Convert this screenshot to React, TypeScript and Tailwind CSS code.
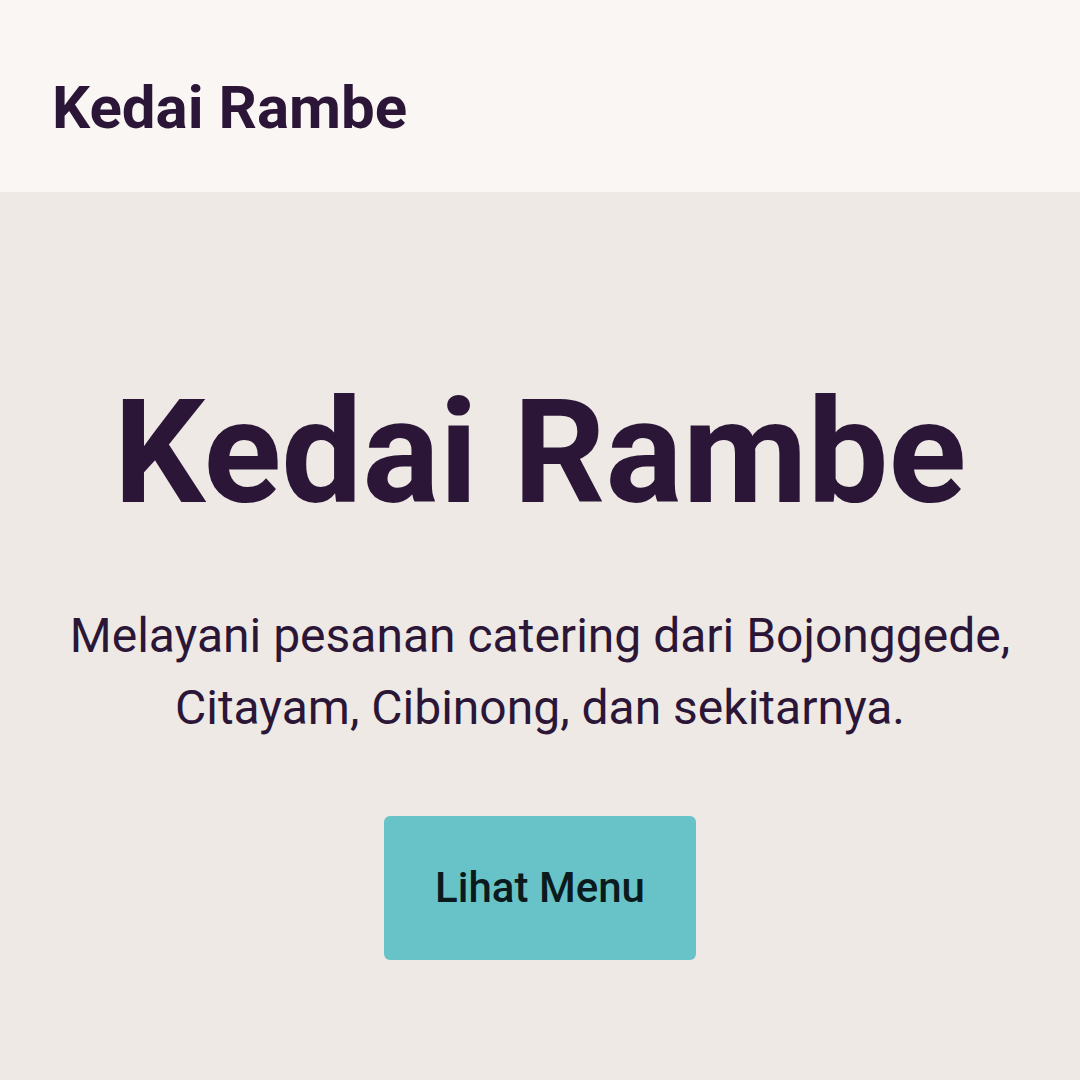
export default function App() {
  return (
    <div className="min-h-screen bg-[#eee9e5] font-['Roboto',sans-serif] text-[#2b1638]">
      <header className="h-[192px] bg-[#faf6f3] px-[52px] pt-[78px]">
        <h2 className="text-[60px] font-bold leading-none">Kedai Rambe</h2>
      </header>

      <main className="flex flex-col items-center text-center px-[40px] pt-[175px]">
        <h1 className="text-[144px] font-bold leading-[1.2]">Kedai Rambe</h1>
        <p className="mt-[60px] text-[48px] leading-[72px] max-w-[1000px]">
          Melayani pesanan catering dari Bojonggede, Citayam, Cibinong, dan sekitarnya.
        </p>
        <button className="mt-[72px] w-[312px] h-[144px] bg-[#67c3c8] rounded-[6px] text-[42px] font-medium text-[#0b1a1c]">
          Lihat Menu
        </button>
      </main>
    </div>
  );
}
